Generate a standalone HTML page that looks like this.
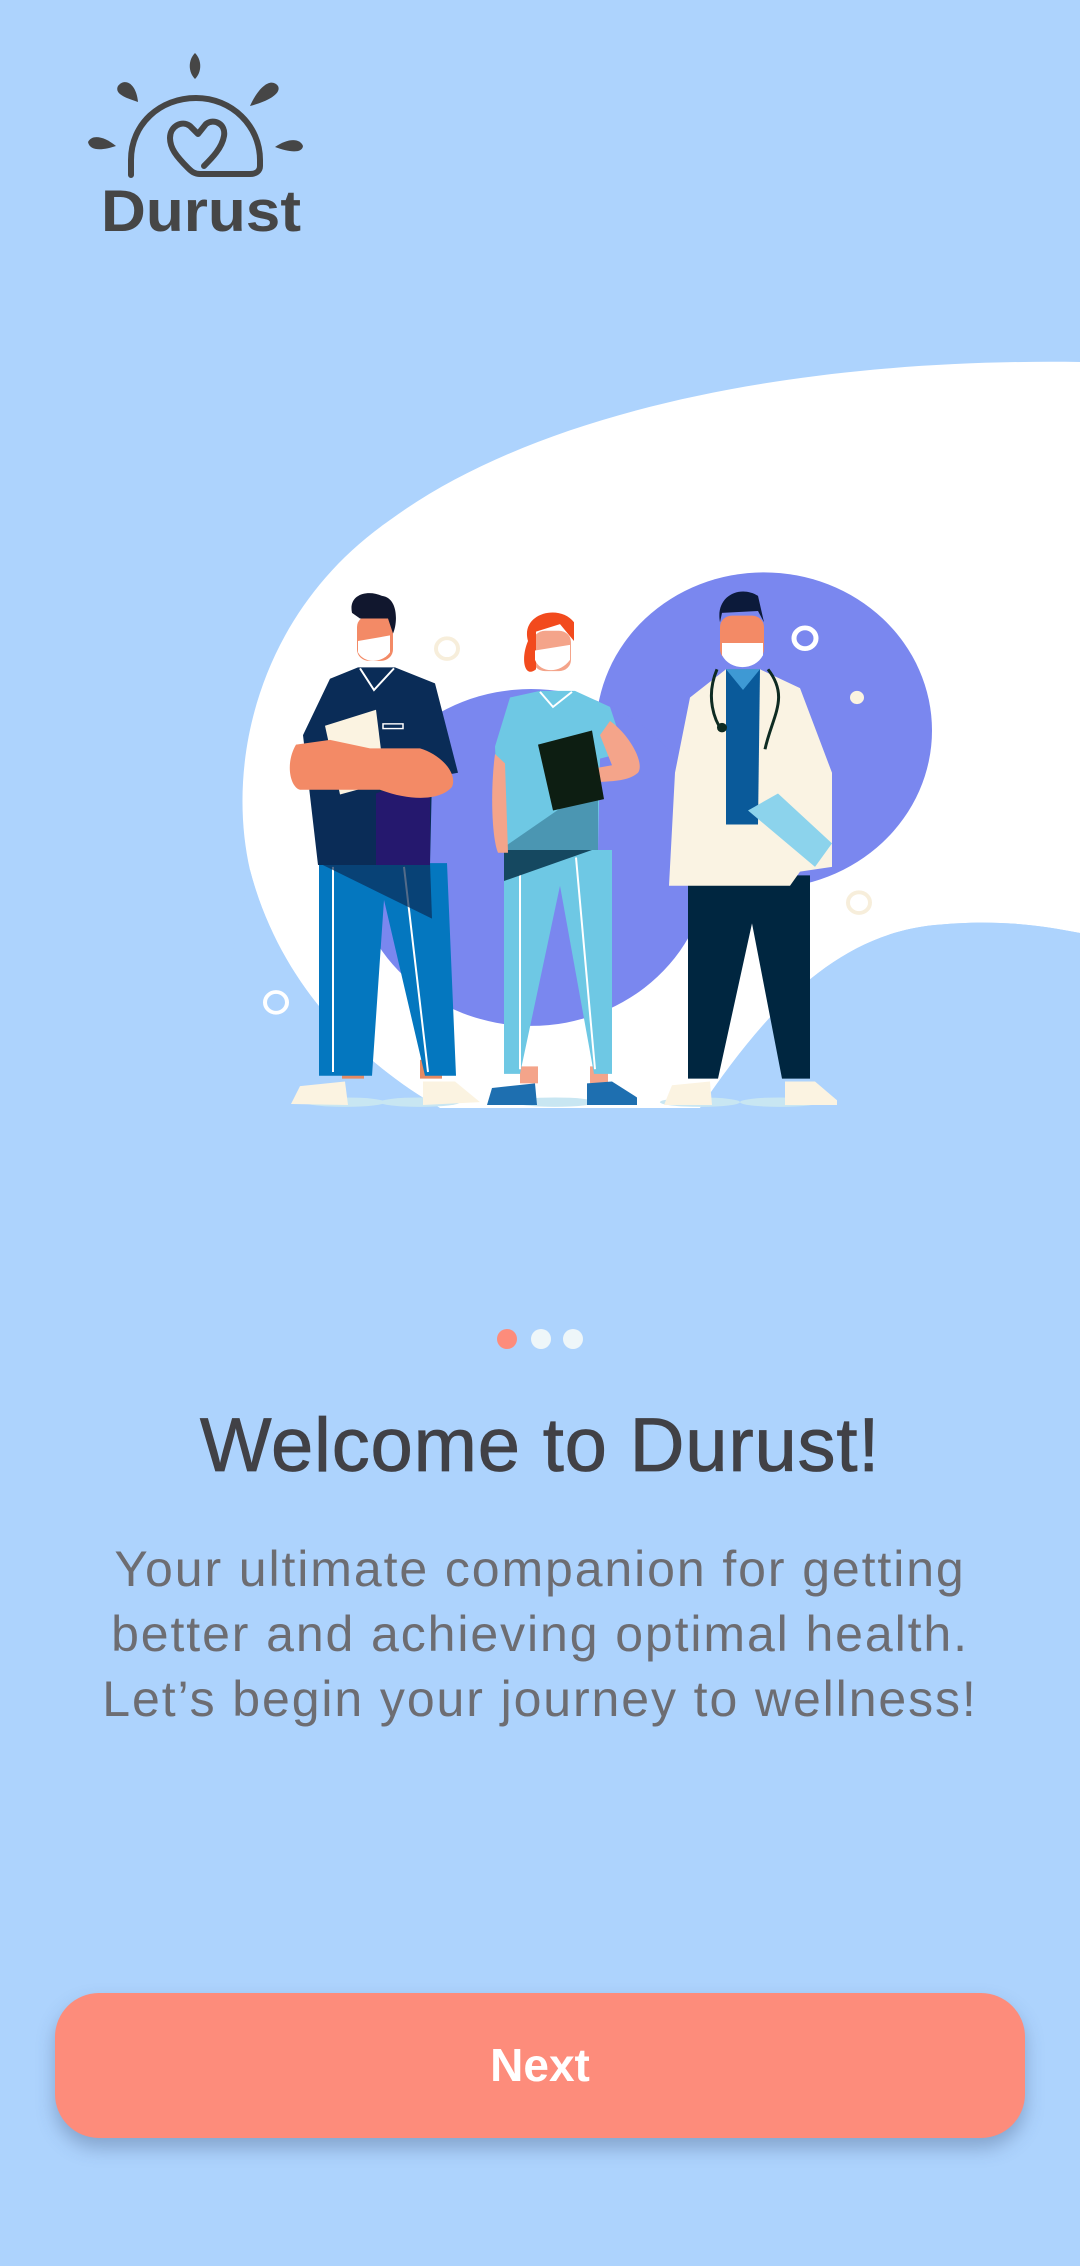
<!DOCTYPE html>
<html><head><meta charset="utf-8">
<style>
html,body{margin:0;padding:0;}
body{width:1080px;height:2266px;background:#add3fd;position:relative;overflow:hidden;font-family:"Liberation Sans",sans-serif;}
svg.ill{position:absolute;left:0;top:0;}
.h1{position:absolute;left:0;width:1080px;top:1402px;text-align:center;font-size:76px;color:#414146;letter-spacing:0.8px;-webkit-text-stroke:0.8px #414146;}
.p{position:absolute;left:0;width:1080px;top:1537px;text-align:center;font-size:50px;line-height:65px;color:#6d6d72;letter-spacing:1.9px;}
.btn{position:absolute;left:55px;top:1993px;width:970px;height:145px;border-radius:44px;background:#fd8c7b;box-shadow:0 10px 18px rgba(60,80,120,0.35);color:#fff;font-size:46px;font-weight:bold;text-align:center;line-height:145px;}
</style></head><body>
<svg class="ill" width="1080" height="1400" viewBox="0 0 1080 1400">
  <g fill="#464646">
    <path d="M195,53 C188,60 188,72 195,79 C202,72 202,60 195,53Z"/>
    <path d="M118,86 C124,78 136,82 138,102 C126,98 114,94 118,86Z"/>
    <path d="M278,86 C272,78 260,84 250,106 C266,102 282,94 278,86Z"/>
    <path d="M88,142 C92,134 104,136 116,146 C104,150 90,152 88,142Z"/>
    <path d="M303,146 C300,138 288,138 275,147 C288,152 302,154 303,146Z"/>
  </g>
  <path d="M131,175 L131,160 C131,124 160,98 196,98 C232,98 260,126 260,160 L260,166 C260,171 256,174 250,174 L200,174 C195,174 192,172 188,168 C176,156 170,148 170,138 C170,126 182,120 190,126 L198,134 L206,124 C214,118 226,124 224,136 C222,148 212,158 204,166" fill="none" stroke="#464646" stroke-width="6" stroke-linecap="round" stroke-linejoin="round"/>
  <text x="101" y="231" font-family="Liberation Sans, sans-serif" font-size="58" font-weight="bold" fill="#464646" textLength="200" lengthAdjust="spacingAndGlyphs">Durust</text>

  <path d="M1080,362 C800,358 540,410 390,520 C260,610 225,760 250,870 C280,985 360,1062 440,1108 L700,1108 C760,1020 830,935 935,925 C995,919 1040,925 1080,933 Z" fill="#ffffff"/>
  <g transform="translate(0,20) scale(1,0.941)">
  <circle cx="764" cy="755" r="168" fill="#7a87ef"/>
  <circle cx="531" cy="890" r="179" fill="#7a87ef"/>
  </g>
  <path d="M700,1108 C760,1020 830,935 935,925 C995,919 1040,925 1080,933 L1080,1200 L600,1200 Z" fill="#add3fd"/>
  <path d="M250,870 C280,985 360,1062 440,1108 L200,1108 Z" fill="#add3fd"/>
  <g transform="translate(0,20) scale(1,0.941)">
  <circle cx="447" cy="668" r="11" fill="none" stroke="#f7eedb" stroke-width="4"/>
  <circle cx="805" cy="657" r="11" fill="none" stroke="#ffffff" stroke-width="5"/>
  <circle cx="857" cy="720" r="7" fill="#fbf3e1"/>
  <circle cx="859" cy="938" r="11" fill="none" stroke="#f7eedb" stroke-width="4"/>
  <circle cx="276" cy="1044" r="11" fill="none" stroke="#ffffff" stroke-width="4"/>
  <ellipse cx="345" cy="1150" rx="40" ry="5" fill="#c8e6f2"/>
  <ellipse cx="420" cy="1150" rx="40" ry="5" fill="#c8e6f2"/>
  <ellipse cx="555" cy="1150" rx="40" ry="5" fill="#c8e6f2"/>
  <ellipse cx="700" cy="1150" rx="40" ry="5" fill="#c8e6f2"/>
  <ellipse cx="780" cy="1150" rx="40" ry="5" fill="#c8e6f2"/>

  <rect x="342" y="1105" width="22" height="20" fill="#e58a63"/>
  <rect x="420" y="1105" width="22" height="20" fill="#e58a63"/>
  <path d="M319,896 L447,896 L456,1122 L425,1122 L384,935 L372,1122 L319,1122 Z" fill="#0477bf"/>
  <path d="M333,900 L333,1118 M404,900 L428,1118" stroke="#fff" stroke-width="2"/>
  <path d="M319,896 L430,896 L432,955 Z" fill="#0a2c57" opacity="0.7"/>
  <path d="M291,1152 L300,1133 L345,1128 L348,1153 Z" fill="#fbf3e1"/>
  <path d="M423,1128 L455,1128 L480,1150 L423,1153 Z" fill="#fbf3e1"/>
  <path d="M303,760 L330,700 L358,688 L395,688 L435,705 L458,800 L432,805 L430,898 L318,898 Z" fill="#0a2c57"/>
  <path d="M376,822 L430,800 L430,898 L376,898 Z" fill="#25186e"/>
  <path d="M360,689 L374,712 L394,689" fill="none" stroke="#fff" stroke-width="2"/>
  <rect x="383" y="748" width="20" height="5" fill="none" stroke="#fff" stroke-width="1.5"/>
  <path d="M325,750 L376,733 L385,810 L340,823 Z" fill="#fbf3e1"/>
  <path d="M296,770 C285,790 290,815 300,818 L380,818 C410,830 440,830 452,815 C458,800 440,780 420,774 L370,774 L330,765 Z" fill="#f38a66"/>
  <rect x="357" y="633" width="36" height="48" rx="12" fill="#f38a66"/>
  <path d="M352,630 C348,610 368,605 382,612 C398,614 398,640 393,652 L388,636 L360,636 Z" fill="#11172e"/>
  <path d="M358,660 L390,654 L390,672 C382,684 364,684 358,672 Z" fill="#fff"/>

  <rect x="520" y="1112" width="18" height="18" fill="#f4a48a"/>
  <rect x="590" y="1112" width="18" height="18" fill="#f4a48a"/>
  <path d="M504,882 L612,882 L612,1120 L594,1120 L560,920 L520,1120 L504,1120 Z" fill="#6ec8e4"/>
  <path d="M520,890 L520,1115 M576,890 L595,1115" stroke="#fff" stroke-width="2"/>
  <path d="M504,882 L592,882 L504,915 Z" fill="#154860"/>
  <path d="M487,1153 L492,1135 L535,1130 L537,1153 Z" fill="#1e6fb0"/>
  <path d="M587,1130 L612,1128 L637,1145 L637,1153 L587,1153 Z" fill="#1e6fb0"/>
  <path d="M495,772 L510,720 L540,713 L575,713 L610,730 L625,778 L600,785 L598,882 L500,882 Z" fill="#6ec8e4"/>
  <path d="M500,882 L598,882 L598,810 Z" fill="#4b96b2"/>
  <path d="M540,714 L553,730 L572,714" fill="none" stroke="#fff" stroke-width="2"/>
  <path d="M495,780 C490,820 492,870 498,885 L508,885 L505,790 Z" fill="#f4a48a"/>
  <path d="M610,745 C630,760 645,790 638,800 C625,812 600,808 570,812 L570,800 L612,792 L600,760 Z" fill="#f4a48a"/>
  <path d="M538,770 L592,755 L604,828 L553,840 Z" fill="#0d1e12"/>
  <rect x="533" y="649" width="38" height="43" rx="12" fill="#f4a48a"/>
  <path d="M528,660 C520,630 560,620 574,640 L574,660 L560,642 L536,650 L536,690 C525,700 520,680 528,660 Z" fill="#f24a1d"/>
  <path d="M535,670 L570,664 L570,680 C560,695 540,694 535,680 Z" fill="#fff"/>

  <path d="M688,909 L810,909 L810,1125 L782,1125 L752,960 L718,1125 L688,1125 Z" fill="#002640"/>
  <path d="M664,1153 L672,1132 L710,1128 L712,1153 Z" fill="#fbf3e1"/>
  <path d="M785,1128 L815,1128 L837,1148 L837,1153 L785,1153 Z" fill="#fbf3e1"/>
  <path d="M690,720 L726,690 L760,690 L800,710 L832,800 L832,900 L800,905 L790,920 L669,920 L675,800 Z" fill="#faf3e3"/>
  <path d="M726,690 L760,690 L758,855 L726,855 Z" fill="#0a5a9a"/>
  <path d="M726,690 L743,712 L760,690" fill="#3e99d4"/>
  <path d="M717,690 C705,720 715,745 722,755 M768,690 C790,720 772,740 765,775" fill="none" stroke="#0e2b22" stroke-width="3"/>
  <circle cx="722" cy="752" r="5" fill="#0e2b22"/>
  <path d="M748,840 L778,822 L832,875 L815,900 Z" fill="#8cd3ec"/>
  <rect x="720" y="633" width="44" height="48" rx="12" fill="#f38a66"/>
  <path d="M720,640 C715,612 740,600 758,612 L764,640 L758,628 L722,630 Z" fill="#0c1a3a"/>
  <path d="M722,662 L763,662 L763,675 C755,692 730,692 722,675 Z" fill="#fff"/>
  </g>
</svg>
<div class="h1">Welcome to Durust!</div>
<svg style="position:absolute;left:0;top:1328px" width="1080" height="24">
  <circle cx="507" cy="11" r="10" fill="#fd8c7b"/>
  <circle cx="541" cy="11" r="10" fill="#eef6f9"/>
  <circle cx="573" cy="11" r="10" fill="#eef6f9"/>
</svg>
<div class="p">Your ultimate companion for getting<br>better and achieving optimal health.<br>Let’s begin your journey to wellness!</div>
<div class="btn">Next</div>
</body></html>
